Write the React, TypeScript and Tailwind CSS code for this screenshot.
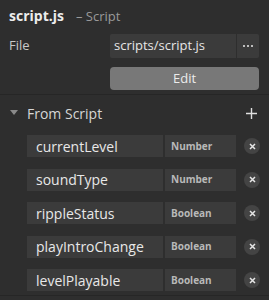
import React from "react";

const rows = [
  { name: "currentLevel", type: "Number" },
  { name: "soundType", type: "Number" },
  { name: "rippleStatus", type: "Boolean" },
  { name: "playIntroChange", type: "Boolean" },
  { name: "levelPlayable", type: "Boolean" },
];

export default function App() {
  return (
    <div
      className="w-[269px] h-[300px] bg-[#2e2e2e] text-[#dcdcdc] overflow-hidden"
      style={{ fontFamily: '"Open Sans", "Noto Sans", sans-serif' }}
    >
      <div className="h-[32px] flex items-center pl-[9px]">
        <span className="text-[14px] font-bold text-[#ececec] leading-none">script.js</span>
        <span className="ml-[12px] text-[13px] text-[#9a9a9a] leading-none">– Script</span>
      </div>
      <div className="flex items-center h-[24px] mt-[2px]">
        <span className="w-[110px] pl-[9px] text-[13px] text-[#c8c8c8]">File</span>
        <div className="flex h-[24px] w-[149px] rounded-[2px] overflow-hidden">
          <div className="flex-1 bg-[#3b3b3b] flex items-center pl-[4px] text-[13px] text-[#e6e6e6]">
            scripts/script.js
          </div>
          <div className="w-[22px] ml-[1px] bg-[#3b3b3b] flex items-center justify-center gap-[2px]">
            <span className="w-[2px] h-[2px] bg-[#bdbdbd]" />
            <span className="w-[2px] h-[2px] bg-[#bdbdbd]" />
            <span className="w-[2px] h-[2px] bg-[#bdbdbd]" />
          </div>
        </div>
      </div>
      <div className="flex mt-[9px] pl-[110px]">
        <div className="w-[149px] h-[23px] rounded-[4px] bg-[#787878] flex items-center justify-center text-[13px] text-[#ececec]">
          Edit
        </div>
      </div>
      <div className="mt-[4px] border-t border-[#262626]" />
      <div className="flex items-center h-[36px] pl-[10px] pr-[12px]">
        <svg width="8" height="6" viewBox="0 0 8 6" className="mr-[9px]">
          <polygon points="0,0 8,0 4,5" fill="#8a8a8a" />
        </svg>
        <span className="text-[14px] text-[#d6d6d6]">From Script</span>
        <svg width="11" height="11" viewBox="0 0 11 11" className="ml-auto">
          <path d="M5.5 0v11M0 5.5h11" stroke="#e0e0e0" strokeWidth="1.4" />
        </svg>
      </div>
      <div className="flex flex-col gap-[11.5px] mt-[4px]">
        {rows.map((r) => (
          <div key={r.name} className="flex items-center h-[22px] pl-[27px]">
            <div className="w-[136px] h-[22px] bg-[#3b3b3b] flex items-center pl-[9px] text-[14px] text-[#e8e8e8] whitespace-nowrap overflow-hidden">
              {r.name}
            </div>
            <div className="w-[71px] h-[22px] ml-[2px] bg-[#3b3b3b] flex items-center pl-[6px] text-[10px] font-bold text-[#b8b8b8]">
              {r.type}
            </div>
            <div className="ml-[8px] w-[16px] h-[16px] rounded-full bg-[#444444] flex items-center justify-center">
              <svg width="7" height="7" viewBox="0 0 7 7">
                <path d="M1 1l5 5M6 1l-5 5" stroke="#e6e6e6" strokeWidth="1.5" />
              </svg>
            </div>
          </div>
        ))}
      </div>
      <div className="mt-[4px] border-t border-[#262626]" />
    </div>
  );
}
